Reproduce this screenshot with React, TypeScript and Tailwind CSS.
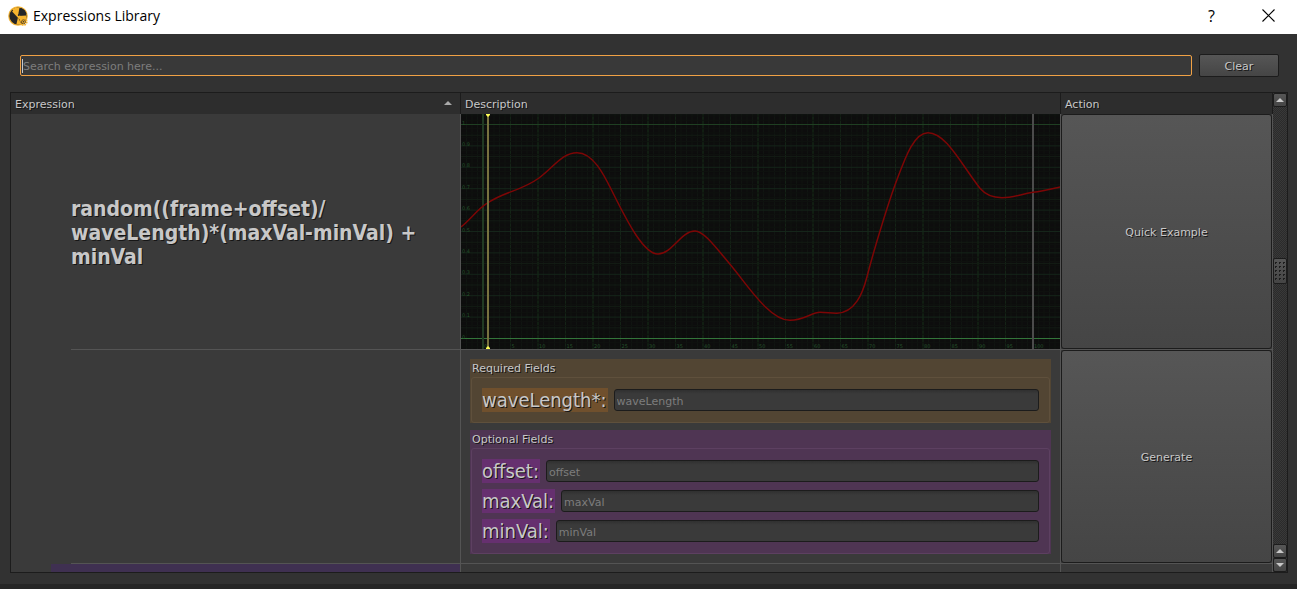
import React from "react";

const UI_FONT = "font-['DejaVu_Sans',sans-serif]";
const RAISED = "border border-[#1c1c1c] bg-linear-to-b from-[#565656] to-[#454545]";
const SHADOW = "[text-shadow:1px_1px_0_#161616]";

const CURVE =
  "M0 113C10 105 17 94.5 27 88.7 45 77 60 77 78 64 92 54 101 38.7 116 38.7 133 38.7 144 63 153 81 167 109 183 140 197 140 211 140 220 117 234 117 243 117 256 135 269 150.3 285 169 308 206.3 329 206.3 343 206.3 351 198.3 359 198.3 366 198.3 370 199.5 376 199.3 394 198.5 401.5 180 406 162.7 415 128 428.5 86 434 71 443 47 452 18.7 467 18.7 485 18.7 500 50 519 74.3 525 81.5 534 83.7 541 83.7 553 83.7 560 80 572 78.3 582 77 590 75 599 73";

const frameX = (frame: number) => 22 + frame * 5.5;
const valueY = (value: number) => 224.5 - value * 214;

function CurveGraph() {
  const frames = Array.from({ length: 109 }, (_, i) => i - 3);
  const levels = Array.from({ length: 111 }, (_, i) => (i - 4) / 100);
  const labels = Array.from({ length: 21 }, (_, i) => i * 5);
  const values = ["0", "0.1", "0.2", "0.3", "0.4", "0.5", "0.6", "0.7", "0.8", "0.9", "1"];
  return (
    <svg
      viewBox="0 0 599 235"
      preserveAspectRatio="none"
      className="block h-[235px] w-full bg-[#0d0d0d]"
      role="img"
      aria-label="Random wave curve"
    >
      {frames.map((f) => (
        <line
          key={f}
          x1={frameX(f)}
          x2={frameX(f)}
          y1={0}
          y2={235}
          stroke={f % 10 === 0 ? "#173019" : f % 5 === 0 ? "#142316" : "#101511"}
        />
      ))}
      {levels.map((v, i) =>
        i % 2 === 0 || (i - 4) % 5 === 0 ? (
          <line
            key={v}
            x1={0}
            x2={599}
            y1={valueY(v)}
            y2={valueY(v)}
            stroke={(i - 4) % 10 === 0 ? "#15251a" : (i - 4) % 5 === 0 ? "#131c14" : "#0f120f"}
          />
        ) : null
      )}
      <line x1={0} x2={599} y1={10.5} y2={10.5} stroke="#1f3f22" />
      <line x1={0} x2={599} y1={224.5} y2={224.5} stroke="#33753a" />
      <line x1={22} x2={22} y1={0} y2={235} stroke="#213a23" strokeWidth={2} />
      <g fill="#24512a" fontFamily="DejaVu Sans, sans-serif" fontSize={5}>
        {values.map((v, i) => (
          <text key={v} x={1} y={valueY(i / 10)}>{v}</text>
        ))}
        {labels.map((n) => (
          <text key={n} x={frameX(n) + 1} y={234}>{n}</text>
        ))}
      </g>
      <line x1={572} x2={572} y1={0} y2={235} stroke="#4b4b4b" strokeWidth={2} />
      <path d={CURVE} fill="none" stroke="#7d0606" strokeWidth={1.5} />
      <line x1={27} x2={27} y1={0} y2={235} stroke="#77723f" strokeWidth={2} />
      <path d="M25 0h4v1l-2 2-2-2zM25 235h4v-1l-2-2-2 2z" fill="#ffff55" />
    </svg>
  );
}

type Field = { name: string; required?: boolean };

function FieldRow({ name, required }: Field) {
  return (
    <div className="flex h-6 items-center gap-1.5">
      <label
        htmlFor={name}
        className={`h-6 pr-px font-['DejaVu_Sans_Condensed','DejaVu_Sans',sans-serif] text-[20px] leading-6 text-[#c8c8c8] ${SHADOW} ${
          required ? "bg-[#70502d]" : "bg-[#66306f]"
        }`}
      >
        {name}
        {required ? "*" : ""}:
      </label>
      <input
        id={name}
        type="text"
        placeholder={name}
        className="h-[22px] min-w-0 flex-1 rounded-[3px] border border-[#1c1c1c] bg-linear-to-b from-[#303030] to-[#3a3a3a] to-20% px-0.5 pt-0.5 text-[11px] text-[#c8c8c8] outline-none placeholder:text-[#7d7d7d]"
      />
    </div>
  );
}

function FieldGroup({ title, fields, tone }: { title: string; fields: Field[]; tone: "brown" | "purple" }) {
  return (
    <section className={`px-px ${tone === "brown" ? "bg-[#524533]" : "bg-[#4f3553]"}`}>
      <h2 className={`h-[18px] pt-px pl-px text-[11px] leading-[18px] text-[#c8c8c8] ${SHADOW}`}>{title}</h2>
      <div
        className={`flex flex-col gap-1.5 rounded-[3px] border p-2.5 ${
          tone === "brown" ? "border-[#5f503c]" : "border-[#5d4061]"
        }`}
      >
        {fields.map((f) => (
          <FieldRow key={f.name} {...f} />
        ))}
      </div>
    </section>
  );
}

function Arrow({ down = false }: { down?: boolean }) {
  return (
    <svg width="8" height="4" viewBox="0 0 8 4" aria-hidden="true" className={down ? "rotate-180" : ""}>
      <path d="M0 4 4 0l4 4z" fill="#c8c8c8" />
    </svg>
  );
}

function ScrollButton({ label, down }: { label: string; down?: boolean }) {
  return (
    <button aria-label={label} className={`flex h-3.5 shrink-0 items-center justify-center rounded-[2px] ${RAISED}`}>
      <Arrow down={down} />
    </button>
  );
}

function ScrollBar() {
  return (
    <div className="flex w-3.5 shrink-0 flex-col bg-[repeating-conic-gradient(#2b2b2b_0_25%,#393939_0_50%)] bg-[length:2px_2px]">
      <ScrollButton label="Scroll up" />
      <div className="flex-[151]" />
      <div className={`flex h-[26px] items-center justify-center rounded-[2px] ${RAISED}`}>
        <svg width="11" height="19" viewBox="0 0 11 19" aria-hidden="true">
          {[0, 4, 8].map((x) =>
            [0, 4, 8, 12, 16].map((y) => <path key={`${x}-${y}`} d={`M${x} ${y}h2v1h-1v1h-1z`} fill="#1c1c1c" />)
          )}
        </svg>
      </div>
      <div className="flex-[260]" />
      <ScrollButton label="Page up" />
      <ScrollButton label="Scroll down" down />
    </div>
  );
}

function AppIcon() {
  return (
    <svg width="20" height="20" viewBox="0 0 20 20" aria-hidden="true">
      <circle cx="10" cy="10" r="9.8" fill="#f2b233" />
      <circle cx="10" cy="10" r="8.6" fill="#262626" />
      <path d="M10 10 4.2 3.6A8.6 8.6 0 0 1 11.5 1.6z" fill="#f7b52f" />
      <path d="M10 10 13 2A8.6 8.6 0 0 1 18.5 8z" fill="#262626" />
      <path d="M10 10 18.5 9.5A8.6 8.6 0 0 1 16 16z" fill="#f7b52f" />
      <path d="M5.2 4.4 15 15" stroke="#f7b52f" strokeWidth="3" />
      <path d="M10 11 8.4 18.4A8.6 8.6 0 0 0 13 18z" fill="#f7b52f" />
      <circle cx="10.8" cy="9" r="1" fill="#262626" />
      <circle cx="15.5" cy="15.8" r="3.1" fill="none" stroke="#f7b52f" strokeWidth="2" strokeDasharray="1.6 .8" />
      <circle cx="15.5" cy="15.8" r="2" fill="#f7b52f" stroke="#59431b" strokeWidth=".8" />
      <circle cx="15.5" cy="15.8" r=".8" fill="#333" />
    </svg>
  );
}

const HEAD = `h-[21px] border-r border-[#1c1c1c] bg-[#2d2d2d] px-1 pt-[3px] text-left font-normal leading-4 ${SHADOW}`;
const CELL = "h-px border-r border-b border-[#545454] p-0";
const ACTION = `block h-full w-full rounded-[3px] pt-[3px] text-[11px] text-[#c8c8c8] ${SHADOW} ${RAISED}`;

export default function App() {
  return (
    <div className={`flex min-h-screen flex-col bg-[#323232] text-[11px] text-[#c8c8c8] ${UI_FONT}`}>
      <header className="flex h-[34px] items-center bg-white pb-[3px] pl-2 font-['Open_Sans','Noto_Sans',sans-serif] text-black">
        <AppIcon />
        <h1 className="ml-[5px] flex-1 text-[14px] leading-5">Expressions Library</h1>
        <button aria-label="Help" className="w-[57px] text-[16px] leading-5">?</button>
        <button aria-label="Close" className="flex w-[57px] justify-center">
          <svg width="13" height="13" viewBox="0 0 13 13" aria-hidden="true">
            <path d="m.5.5 12 12m0-12-12 12" stroke="#000" strokeWidth="1.1" />
          </svg>
        </button>
      </header>

      <main className="flex-1 pt-5 pr-[9px] pb-[11px] pl-2.5">
        <div className="flex items-center gap-[7px] pr-[9px] pl-2.5">
          <div className="relative flex-1 rounded-[2px] border border-[#f0a145] bg-[#393939]">
            <input
              type="text"
              aria-label="Search expression"
              placeholder="Search expression here..."
              className="block h-[19px] w-full border-0 bg-transparent px-0.5 pt-0.5 text-[11px] outline-none placeholder:text-[#7d7d7d]"
            />
            <span className="absolute top-[3px] left-px h-3.5 w-px bg-[#c8c8c8]" />
          </div>
          <button className={`h-[23px] w-20 rounded-[2px] pt-[3px] ${SHADOW} ${RAISED}`}>Clear</button>
        </div>

        <div className="mt-[15px] flex border border-[#1c1c1c] bg-[#3a3a3a]">
          <table className="min-w-0 flex-1 table-fixed border-separate border-spacing-0">
            <colgroup>
              <col className="w-[450px]" />
              <col />
              <col className="w-[212px]" />
            </colgroup>
            <thead>
              <tr>
                <th className={HEAD}>
                  <span className="flex items-start justify-between pr-1">
                    Expression
                    <span className="flex pt-1 opacity-80"><Arrow /></span>
                  </span>
                </th>
                <th className={HEAD}>Description</th>
                <th className={HEAD}>Action</th>
              </tr>
            </thead>
            <tbody>
              <tr>
                <td className="h-px border-r border-[#545454] p-0 pl-[60px]">
                  <div
                    className={`flex h-full items-center border-b border-[#545454] pt-[3px] font-['DejaVu_Sans_Condensed','DejaVu_Sans',sans-serif] text-[21px] leading-6 font-bold ${SHADOW}`}
                  >
                    <p>
                      random((frame+offset)/
                      <br />
                      waveLength)*(maxVal-minVal) +
                      <br />
                      minVal
                    </p>
                  </div>
                </td>
                <td className={CELL}><CurveGraph /></td>
                <td className={CELL}><button className={ACTION}>Quick Example</button></td>
              </tr>
              <tr>
                <td className="h-px border-r border-[#545454] p-0 pl-[60px]">
                  <div className="h-full border-b border-[#545454]" />
                </td>
                <td className={CELL}>
                  <div className="flex flex-col gap-[7px] p-[9px]">
                    <FieldGroup title="Required Fields" tone="brown" fields={[{ name: "waveLength", required: true }]} />
                    <FieldGroup
                      title="Optional Fields"
                      tone="purple"
                      fields={[{ name: "offset" }, { name: "maxVal" }, { name: "minVal" }]}
                    />
                  </div>
                </td>
                <td className={CELL}><button className={ACTION}>Generate</button></td>
              </tr>
              <tr>
                <td className="border-r border-[#545454] p-0 pl-10"><div className="h-2 bg-[#3f3051]" /></td>
                <td className="border-r border-[#545454] p-0" />
                <td className="border-r border-[#545454] p-0" />
              </tr>
            </tbody>
          </table>
          <ScrollBar />
        </div>
      </main>
      <footer className="h-[5px] bg-[#262626]" />
    </div>
  );
}
